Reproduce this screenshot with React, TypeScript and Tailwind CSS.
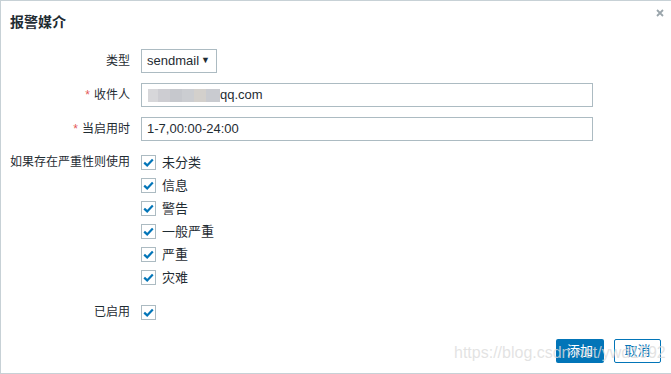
import React from 'react';

const levels = ['未分类', '信息', '警告', '一般严重', '严重', '灾难'];

const font = { fontFamily: '"Liberation Sans", Arial, "Noto Sans CJK SC", sans-serif' };

const Check: React.FC = () => (
  <span className="w-[15px] h-[15px] border border-[#acbbc2] bg-white flex items-center justify-center shrink-0">
    <svg width="11" height="9" viewBox="0 0 11 9">
      <path d="M1.2 4.6 L4.2 7.4 L9.8 1.6" fill="none" stroke="#0275b8" strokeWidth="2.2" />
    </svg>
  </span>
);

const Label: React.FC<{ text: string; required?: boolean }> = ({ text, required }) => (
  <div className="w-[120px] shrink-0 text-right pr-[0px] leading-[24px] h-[24px]">
    {required && <span className="text-[#e45959] mr-[4px]">*</span>}
    {text}
  </div>
);

export default function App() {
  return (
    <div
      className="relative w-[671px] h-[374px] bg-white border-t border-l border-b border-[#c7d1d6] text-[12px] text-[#1f2c33] overflow-hidden"
      style={font}
    >
      {/* Header */}
      <div className="h-[43px] pl-[9px] pt-[13px]">
        <h2 className="text-[14px] leading-[16px] font-bold text-[#1f2c33]">报警媒介</h2>
      </div>
      <button className="absolute right-[6px] top-[7px] w-[10px] h-[10px] flex items-center justify-center">
        <svg width="8" height="8" viewBox="0 0 8 8">
          <path d="M1 1 L7 7 M7 1 L1 7" stroke="#9aa5ab" strokeWidth="1.8" />
        </svg>
      </button>

      {/* Form */}
      <div className="pl-[9px] pt-[5px] flex flex-col">
        <div className="flex items-center gap-[11px]">
          <Label text="类型" />
          <div className="w-[76px] h-[24px] border border-[#acbbc2] flex items-center justify-between pl-[5px] pr-[6px] text-[13px]">
            <span>sendmail</span>
            <span className="text-[9px]">▼</span>
          </div>
        </div>

        <div className="flex items-center gap-[11px] mt-[10px]">
          <Label text="收件人" required />
          <div className="relative w-[452px] h-[24px] border border-[#acbbc2] flex items-center pl-[78px] text-[13px]">
            <div className="absolute left-[6px] top-[5px] h-[13px] flex">
              <span className="w-[10px] bg-[#d7d7da]" />
              <span className="w-[12px] bg-[#cdcdd2]" />
              <span className="w-[12px] bg-[#c6c8cd]" />
              <span className="w-[12px] bg-[#cbcdd1]" />
              <span className="w-[12px] bg-[#d3d0cc]" />
              <span className="w-[14px] bg-[#c9cbd0]" />
            </div>
            <span>qq.com</span>
          </div>
        </div>

        <div className="flex items-center gap-[11px] mt-[10px]">
          <Label text="当启用时" required />
          <div className="w-[452px] h-[24px] border border-[#acbbc2] flex items-center pl-[5px] text-[13px]">
            1-7,00:00-24:00
          </div>
        </div>

        <div className="flex gap-[11px] mt-[10px]">
          <div className="w-[120px] shrink-0 text-right leading-[23px]">如果存在严重性则使用</div>
          <div className="flex flex-col">
            {levels.map((l) => (
              <div key={l} className="h-[23px] flex items-center gap-[6px]">
                <Check />
                <span className="text-[13px]">{l}</span>
              </div>
            ))}
          </div>
        </div>

        <div className="flex items-center gap-[11px] mt-[11px]">
          <Label text="已启用" />
          <Check />
        </div>
      </div>

      {/* Footer buttons */}
      <div className="flex justify-end gap-[10px] pr-[10px] mt-[15px]">
        <button className="w-[48px] h-[24px] bg-[#0275b8] text-white text-[13px] rounded-[2px]">添加</button>
        <button className="w-[47px] h-[24px] bg-white border border-[#0275b8] text-[#0275b8] text-[13px] rounded-[2px]">取消</button>
      </div>

      <div className="absolute left-[453px] top-[342px] text-[16px] leading-[20px] text-[#dcdcdc]/80 pointer-events-none">
        https://blog.csdn.net/ywd1992
      </div>
    </div>
  );
}
